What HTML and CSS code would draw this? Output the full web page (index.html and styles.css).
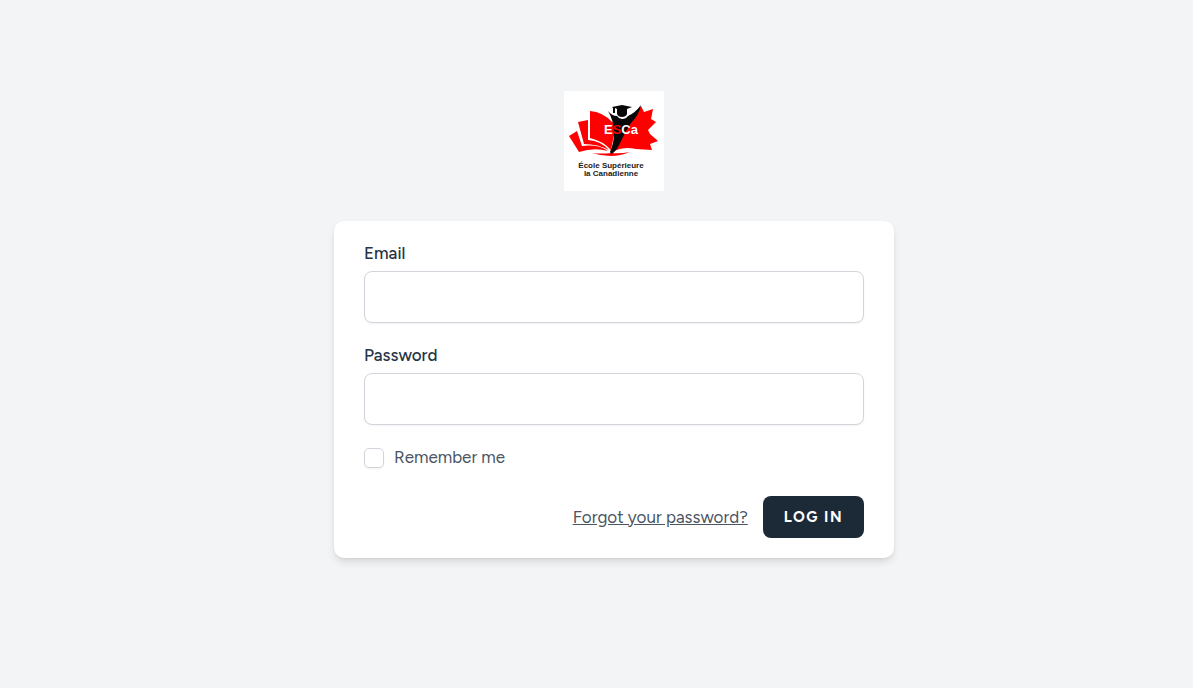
FILE: index.html
```html
<!DOCTYPE html>
<html lang="en">
<head>
  <meta charset="utf-8">
  <meta name="viewport" content="width=device-width, initial-scale=1">
  <title>Log in</title>
  <link rel="stylesheet" href="styles.css">
</head>
<body>
  <main class="page">
    <a class="logo" href="#" aria-label="École Supérieure la Canadienne">
      <svg class="logo-image" viewBox="0 0 100 100">
        <rect width="100" height="100" fill="#fff"/>
        <g fill="#f00">
          <path d="M26 20Q39 21 48 31L50 44L47 59Q39 50 26 47Z"/>
          <path d="M14 31L24 29V49Q37 50 45 59Q34 53 20 53Z"/>
          <path d="M5 45L13 40L18 55Q34 53 44 60Q30 56 15 61Z"/>
          <path d="M28 62Q38 63 47 62Q56 63 66 61Q56 65 47 65Q37 65 28 62Z"/>
          <path d="M50 60L58 40L68 30L77 15L80 21L89 18L87 28L92 31L84 39L86 43L94 50L86 53L88 59L72 58Q60 55 50 60Z"/>
          <path d="M48 31L66 30V45H48Z"/>
        </g>
        <path d="M45 20L50 17L68 16L74 16Q69 24 62 28H54L48 26Z" fill="#fff"/>
        <g fill="#080808">
          <path d="M48 16L58 14L68 16L63 18V23Q62 26 58 26Q54 26 53 23V18L51 17V22H49V17Z"/>
          <path d="M44 20Q48 25 53 25Q55 28 58 28Q62 28 64 25Q71 22 77 14Q75 24 67 32Q61 41 57 50Q53 59 49 62Q47 64 46 61Q50 52 50 42Q50 30 44 20Z"/>
        </g>
        <text class="logo-initials" x="40" y="43">E<tspan fill="#f00">S</tspan>Ca</text>
        <g class="logo-name">
          <text x="47" y="77">École Supérieure</text>
          <text x="47" y="85">la Canadienne</text>
        </g>
      </svg>
    </a>
    <form class="card">
      <div class="field">
        <label class="label" for="email">Email</label>
        <input class="input" id="email" type="email" autocomplete="username">
      </div>
      <div class="field">
        <label class="label" for="password">Password</label>
        <input class="input" id="password" type="password" autocomplete="current-password">
      </div>
      <div class="remember">
        <input class="checkbox" id="remember" type="checkbox">
        <label for="remember">Remember me</label>
      </div>
      <div class="actions">
        <a class="forgot" href="#">Forgot your password?</a>
        <button class="submit" type="submit">Log in</button>
      </div>
    </form>
  </main>
</body>
</html>
```
FILE: styles.css
```css
* {
  box-sizing: border-box;
}

body {
  margin: 0;
  background: #f3f4f6;
  color: #4b5563;
  font-family: Figtree, Lato, sans-serif;
  font-size: 17px;
  line-height: 25px;
}

.page {
  display: flex;
  flex-direction: column;
  align-items: center;
  justify-content: center;
  gap: 30px;
  min-height: 100vh;
  padding: 0 0 39px 35px;
}

.logo,
.logo-image {
  display: block;
  width: 100px;
  height: 100px;
}

.logo-initials {
  font: bold 13px "Liberation Sans", sans-serif;
  fill: #fff;
}

.logo-name {
  font: bold 8px "Liberation Sans", sans-serif;
  text-anchor: middle;
  fill: #222;
}

.card {
  width: 100%;
  max-width: 560px;
  padding: 20px 30px;
  border-radius: 10px;
  background: #fff;
  box-shadow: 0 5px 8px -1px rgb(0 0 0 / 10%), 0 2px 5px -2px rgb(0 0 0 / 10%);
}

.field {
  display: flex;
  flex-direction: column;
  gap: 5px;
  margin-bottom: 20px;
}

.label {
  font-weight: 500;
  color: #263445;
}

.input {
  width: 100%;
  height: 52px;
  padding: 10px 15px;
  border: 1px solid #d1d5db;
  border-radius: 8px;
  background: #fff;
  font: inherit;
  box-shadow: 0 1px 2px rgb(0 0 0 / 5%);
}

.remember {
  display: flex;
  align-items: center;
  gap: 10px;
}

.checkbox {
  appearance: none;
  width: 20px;
  height: 20px;
  margin: 0;
  border: 1px solid #d1d5db;
  border-radius: 5px;
  background: #fff;
  box-shadow: 0 1px 2px rgb(0 0 0 / 5%);
}

.checkbox:checked {
  background: #4f46e5;
}

.actions {
  display: flex;
  align-items: center;
  justify-content: flex-end;
  gap: 15px;
  margin-top: 26px;
}

.forgot {
  color: #4b5563;
}

.submit {
  height: 42px;
  padding: 0 20px;
  border: 1px solid transparent;
  border-radius: 8px;
  background: #1c2936;
  color: #fff;
  font: inherit;
  font-size: 15px;
  font-weight: 700;
  letter-spacing: 0.1em;
  text-transform: uppercase;
}
```
